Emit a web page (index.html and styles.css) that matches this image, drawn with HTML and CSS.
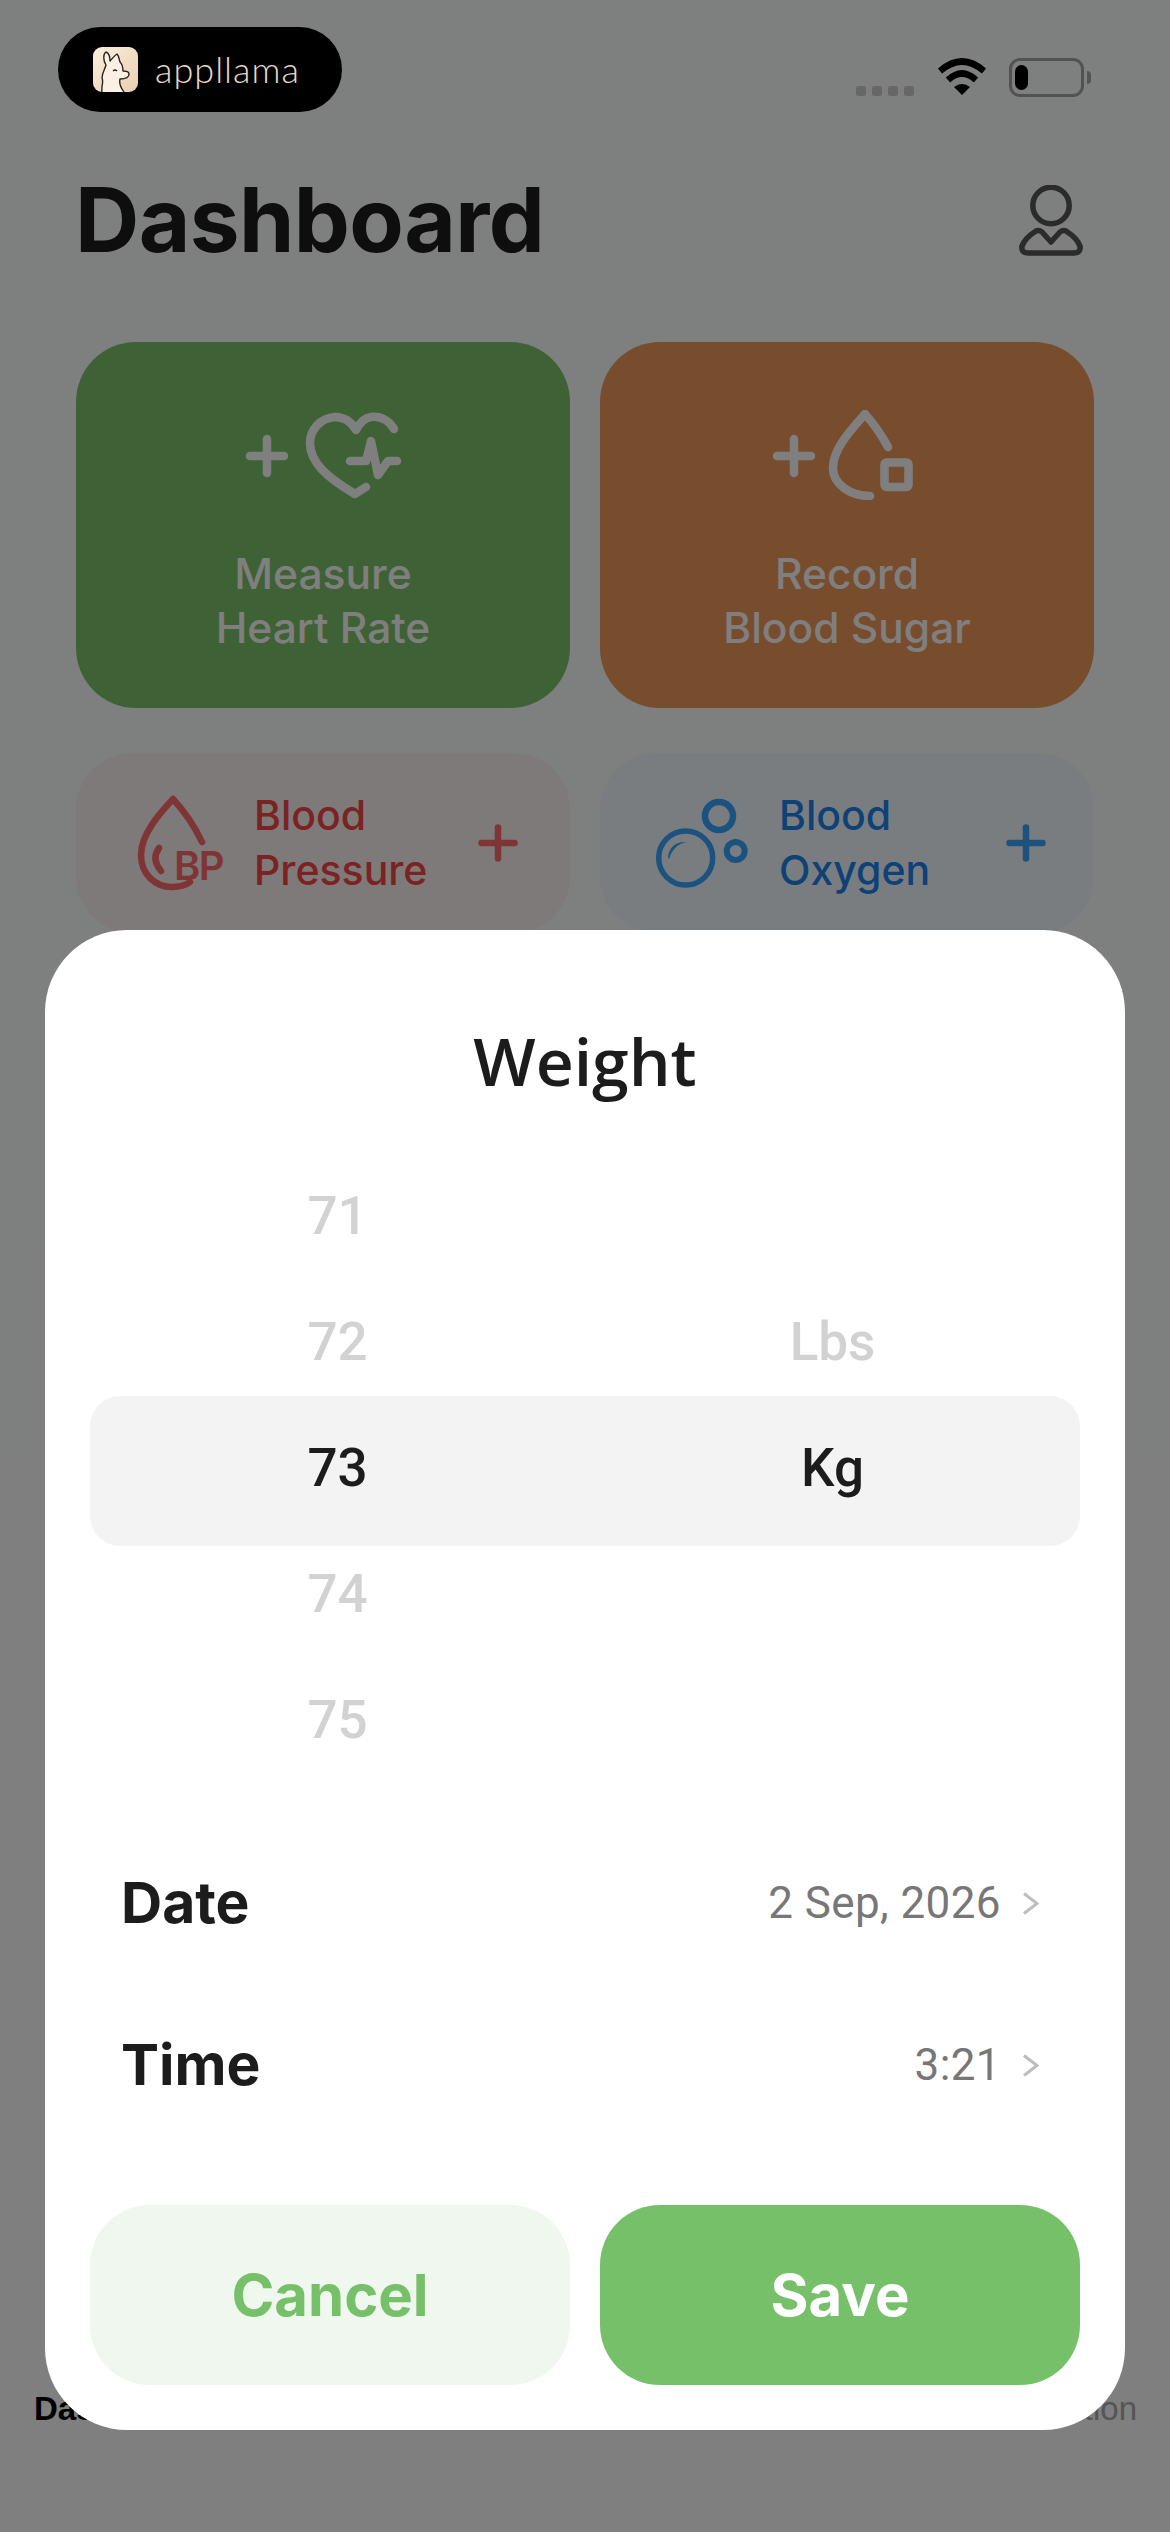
FILE: index.html
```html
<!DOCTYPE html>
<html lang="en">
<head>
<meta charset="utf-8">
<title>Dashboard</title>
<link rel="stylesheet" href="styles.css">
</head>
<body>
<div class="app">
  <div class="status">
    <div class="pill">
      <svg class="llama" viewBox="0 0 45 45">
        <defs><linearGradient id="lg" x1="0" y1="0" x2="1" y2="1"><stop offset="0" stop-color="#fbeedd"/><stop offset="1" stop-color="#e9cfb2"/></linearGradient></defs>
        <rect width="45" height="45" rx="9" fill="url(#lg)"/>
        <path d="M9 45C8 38 11 36 9 31C9 26 12 22 13 18C10 13 10 7 13 5C16 6 17 10 17 14C19 12 21 9 24 7C26 9 26 12 27 15C30 18 30 22 30 24C33 24 36 25 36 27C36 30 33 32 27 32C26 36 28 41 31 45" fill="#fbf0e2" stroke="#2b2420" stroke-width="1.4" stroke-linejoin="round"/>
        <path d="M20 24Q22 22 24 24" fill="none" stroke="#2b2420" stroke-width="1.3"/>
      </svg>
      <span class="brand">appllama</span>
    </div>
    <div class="status-icons">
      <div class="signal"><i></i><i></i><i></i><i></i></div>
      <svg class="wifi" viewBox="0 0 50 37">
        <path d="M3 13Q25 -6 47 13" fill="none" stroke="#000" stroke-width="6.5"/>
        <path d="M11 22Q25 9 39 22" fill="none" stroke="#000" stroke-width="6.5"/>
        <path d="M17 29Q25 23 33 29L25 37Z" fill="#000"/>
      </svg>
      <div class="battery"><div class="battery-level"></div></div>
      <div class="battery-nub"></div>
    </div>
  </div>

  <header class="head">
    <h1 class="title">Dashboard</h1>
    <svg class="person" viewBox="0 0 66 71">
      <circle cx="33" cy="20.5" r="18.2" fill="none" stroke="#565656" stroke-width="5.5"/>
      <path d="M33 57L24 47Q21 44.5 18 46Q7 53 4 61Q3 68 10 68H56Q63 68 62 61Q59 53 48 46Q45 44.5 42 47Z" fill="none" stroke="#565656" stroke-width="5.5" stroke-linejoin="round"/>
    </svg>
  </header>

  <main class="cards">
    <section class="tile tile-green">
      <svg class="tile-icon" viewBox="240 410 160 90">
        <path d="M264 439V473M247 456H281" class="ico"/>
        <path d="M391 429C385 419 376 416 368 417C361 418 356 424 353 430C349 423 342 417 332 417C317 418 307 430 307 443C307 463 325 478 352 494L363 487" class="ico"/>
        <path d="M347 461H363L368 441L375 475L385 461H394" class="ico"/>
      </svg>
      <p class="tile-label">Measure<br>Heart Rate</p>
    </section>
    <section class="tile tile-orange">
      <svg class="tile-icon" viewBox="767 410 160 90">
        <path d="M794 439V473M777 456H811" class="ico"/>
        <path d="M888 447C882 436 874 424 865 414C850 431 833 449 833 468C833 484 850 496 870 496" class="ico"/>
        <rect x="884.5" y="462.5" width="24" height="24.5" rx="2" class="ico"/>
      </svg>
      <p class="tile-label">Record<br>Blood Sugar</p>
    </section>
    <section class="mini mini-red">
      <div class="bp-icon">
        <svg viewBox="130 790 100 100">
          <path d="M202 840C195 825 183 808 173 797C160 811 141 832 141 853C141 872 155 885 172 885C180 885 186 883 190 880" class="ico-sm"/>
          <path d="M159 846Q151 857 161 869" class="ico-sm"/>
        </svg>
        <span class="bp-text">BP</span>
      </div>
      <p class="mini-label">Blood<br>Pressure</p>
      <svg class="mini-plus" viewBox="0 0 40 38"><path d="M20 3.5V34.5M3.5 19H36.5" class="ico-sm"/></svg>
    </section>
    <section class="mini mini-blue">
      <svg class="bubbles" viewBox="650 790 100 100">
        <circle cx="685.7" cy="856" r="27" fill="none" stroke="currentColor" stroke-width="5.5"/>
        <circle cx="719" cy="814" r="14" fill="none" stroke="currentColor" stroke-width="6.5"/>
        <circle cx="735.7" cy="849" r="9" fill="none" stroke="currentColor" stroke-width="6"/>
        <path d="M668 856C668 846 676 839 686 840C678 842 672 847 669 857Z" fill="currentColor"/>
      </svg>
      <p class="mini-label">Blood<br>Oxygen</p>
      <svg class="mini-plus" viewBox="0 0 40 38"><path d="M20 3.5V34.5M3.5 19H36.5" class="ico-sm"/></svg>
    </section>
  </main>

  <nav class="tabs">
    <span class="tab-active">Dashboard</span>
    <span class="tab">Medication</span>
  </nav>

  <div class="scrim"></div>

  <div class="sheet">
    <h2 class="sheet-title">Weight</h2>
    <div class="wheel">
      <div class="wheel-row"><span>71</span><span></span></div>
      <div class="wheel-row"><span>72</span><span>Lbs</span></div>
      <div class="wheel-row wheel-selected"><span>73</span><span>Kg</span></div>
      <div class="wheel-row"><span>74</span><span></span></div>
      <div class="wheel-row"><span>75</span><span></span></div>
    </div>
    <div class="field field-date">
      <span class="field-name">Date</span>
      <span class="field-value">2 Sep, 2026</span>
      <svg class="chev" viewBox="0 0 17 23"><path d="M2 1.5L15 11.5L2 21.5"/></svg>
    </div>
    <div class="field field-time">
      <span class="field-name">Time</span>
      <span class="field-value">3:21</span>
      <svg class="chev" viewBox="0 0 17 23"><path d="M2 1.5L15 11.5L2 21.5"/></svg>
    </div>
    <div class="actions">
      <button class="btn btn-cancel">Cancel</button>
      <button class="btn btn-save">Save</button>
    </div>
  </div>
</div>
</body>
</html>
```
FILE: styles.css
```css
* { box-sizing: border-box; }
html, body { margin: 0; padding: 0; }
body { width: 1170px; height: 2532px; overflow: hidden; font-family: Inter, "Liberation Sans", sans-serif; }
.app { position: relative; width: 1170px; height: 2532px; overflow: hidden; display: flex; flex-direction: column; background: linear-gradient(#fcfffe 0, #fdfffe 900px, #fff 2400px); }

.status { display: flex; justify-content: space-between; align-items: flex-start; padding: 27px 79px 0 58px; height: 112px; }
.pill { position: relative; z-index: 3; width: 284px; height: 85px; border-radius: 43px; background: #000; display: flex; align-items: center; padding-left: 35px; gap: 17px; }
.llama { width: 45px; height: 45px; flex: none; }
.brand { font-family: Lato, sans-serif; font-weight: 300; font-size: 36px; line-height: 45px; color: #e9d8c6; letter-spacing: 1px; }
.status-icons { display: flex; align-items: flex-start; margin-top: 31px; }
.signal { display: flex; gap: 6px; margin-top: 28px; margin-right: 23px; }
.signal i { width: 10px; height: 10px; border-radius: 2.5px; background: #cfcfcf; }
.wifi { width: 50px; height: 37px; margin-right: 22px; }
.battery { width: 75px; height: 39px; border: 3px solid #a4a4a4; border-radius: 11px; padding: 4px 3px; margin-right: 3px; }
.battery-level { width: 13px; height: 25px; border-radius: 7px; background: #000; }
.battery-nub { width: 4px; height: 13px; margin-top: 13px; background: #a8a8a8; border-radius: 0 6px 6px 0; }

.head { display: flex; justify-content: space-between; align-items: flex-start; padding: 0 86px 0 75px; height: 230px; }
.title { margin: 58px 0 0; font-weight: 700; font-size: 89px; line-height: 100px; color: #1c1c1c; letter-spacing: -0.6px; }
.person { width: 66px; height: 71px; margin-top: 73px; }

.cards { display: grid; grid-template-columns: 494px 494px; grid-template-rows: 366px 180px; column-gap: 30px; row-gap: 45px; padding: 0 76px; }
.tile { border-radius: 60px; display: flex; flex-direction: column; align-items: center; padding-top: 68px; color: #fff; }
.tile-green { background: #7cc46a; }
.tile-orange { background: #f09a5c; }
.tile-icon { width: 160px; height: 90px; display: block; flex: none; }
.ico { fill: none; stroke: #fff; stroke-width: 8.5; stroke-linecap: round; stroke-linejoin: round; }
.tile-label { margin: 47px 0 0; text-align: center; font-weight: 500; font-size: 42.5px; line-height: 53.5px; color: #fff; }

.mini { border-radius: 56px; display: flex; align-items: center; position: relative; }
.mini-red { background: #fdf4f2; color: #f64646; }
.mini-blue { background: #f4fbff; color: #1c84e8; }
.bp-icon { position: relative; width: 100px; height: 100px; margin-left: 54px; margin-top: -2px; flex: none; color: #ff6a6a; }
.bp-icon svg { width: 100px; height: 100px; display: block; }
.ico-sm { fill: none; stroke: currentColor; stroke-width: 6.5; stroke-linecap: round; stroke-linejoin: round; }
.bp-text { position: absolute; left: 44px; top: 51px; font-weight: 600; font-size: 40px; line-height: 46px; letter-spacing: -1.5px; color: #ff6a6a; }
.mini-label { margin: 0 0 0 24px; width: 217px; font-weight: 500; font-size: 41px; line-height: 55px; }
.mini-red .mini-label { color: #f64646; }
.mini-blue .mini-label { color: #1c84ee; margin-left: 29px; width: 220px; }
.mini-plus { width: 40px; height: 38px; flex: none; margin-left: 7px; }
.mini-red .mini-plus { color: #ff6a6a; }
.mini-blue .mini-plus { color: #3aa4ff; }
.bubbles { width: 100px; height: 100px; margin-left: 50px; margin-top: -2px; flex: none; color: #38a4ff; }

.tabs { margin-top: auto; height: 143px; display: flex; justify-content: space-between; padding: 0 33px 0 34px; font-family: "Liberation Sans", sans-serif; font-size: 33px; line-height: 40px; }
.tab-active { font-weight: 700; color: #000; }
.tab { color: #aaa; }

.scrim { position: absolute; inset: 0; z-index: 1; background: rgba(0, 0, 0, .5); }

.sheet { position: absolute; z-index: 2; left: 45px; top: 930px; width: 1080px; height: 1500px; border-radius: 82px; background: #fff; padding: 0 45px; }
.sheet-title { margin: 88px 0 0; text-align: center; font-family: "Open Sans", sans-serif; font-weight: 600; font-size: 66px; line-height: 84px; color: #1c1c1c; }
.wheel { margin-top: 54px; }
.wheel-row { display: grid; grid-template-columns: 1fr 1fr; height: 126px; align-items: center; text-align: center; padding-bottom: 6px; font-family: Roboto, sans-serif; font-weight: 500; font-size: 53px; color: #d2d2d2; }
.wheel-selected { color: #1c1c1c; position: relative; background: #f3f3f3; border-radius: 30px; height: 150px; margin: -12px 0; }

.field { display: flex; align-items: center; height: 100px; padding: 0 41px 0 31px; }
.field-date { margin-top: 67px; }
.field-time { margin-top: 62px; }
.field-name { font-weight: 700; font-size: 57px; line-height: 64px; color: #1c1c1c; margin-right: auto; }
.field-value { font-family: Roboto, sans-serif; font-size: 44px; line-height: 50px; letter-spacing: .4px; color: #777; margin-right: 21px; }
.chev { width: 17px; height: 23px; fill: none; stroke: #bdbdbd; stroke-width: 3; }

.actions { display: grid; grid-template-columns: 480px 480px; column-gap: 30px; margin-top: 90px; }
.btn { height: 180px; border: 0; border-radius: 60px; font-family: Inter, sans-serif; font-weight: 700; font-size: 58px; }
.btn-cancel { background: #f0f7ef; color: #75c069; }
.btn-save { background: #75c069; color: #fff; }
```
